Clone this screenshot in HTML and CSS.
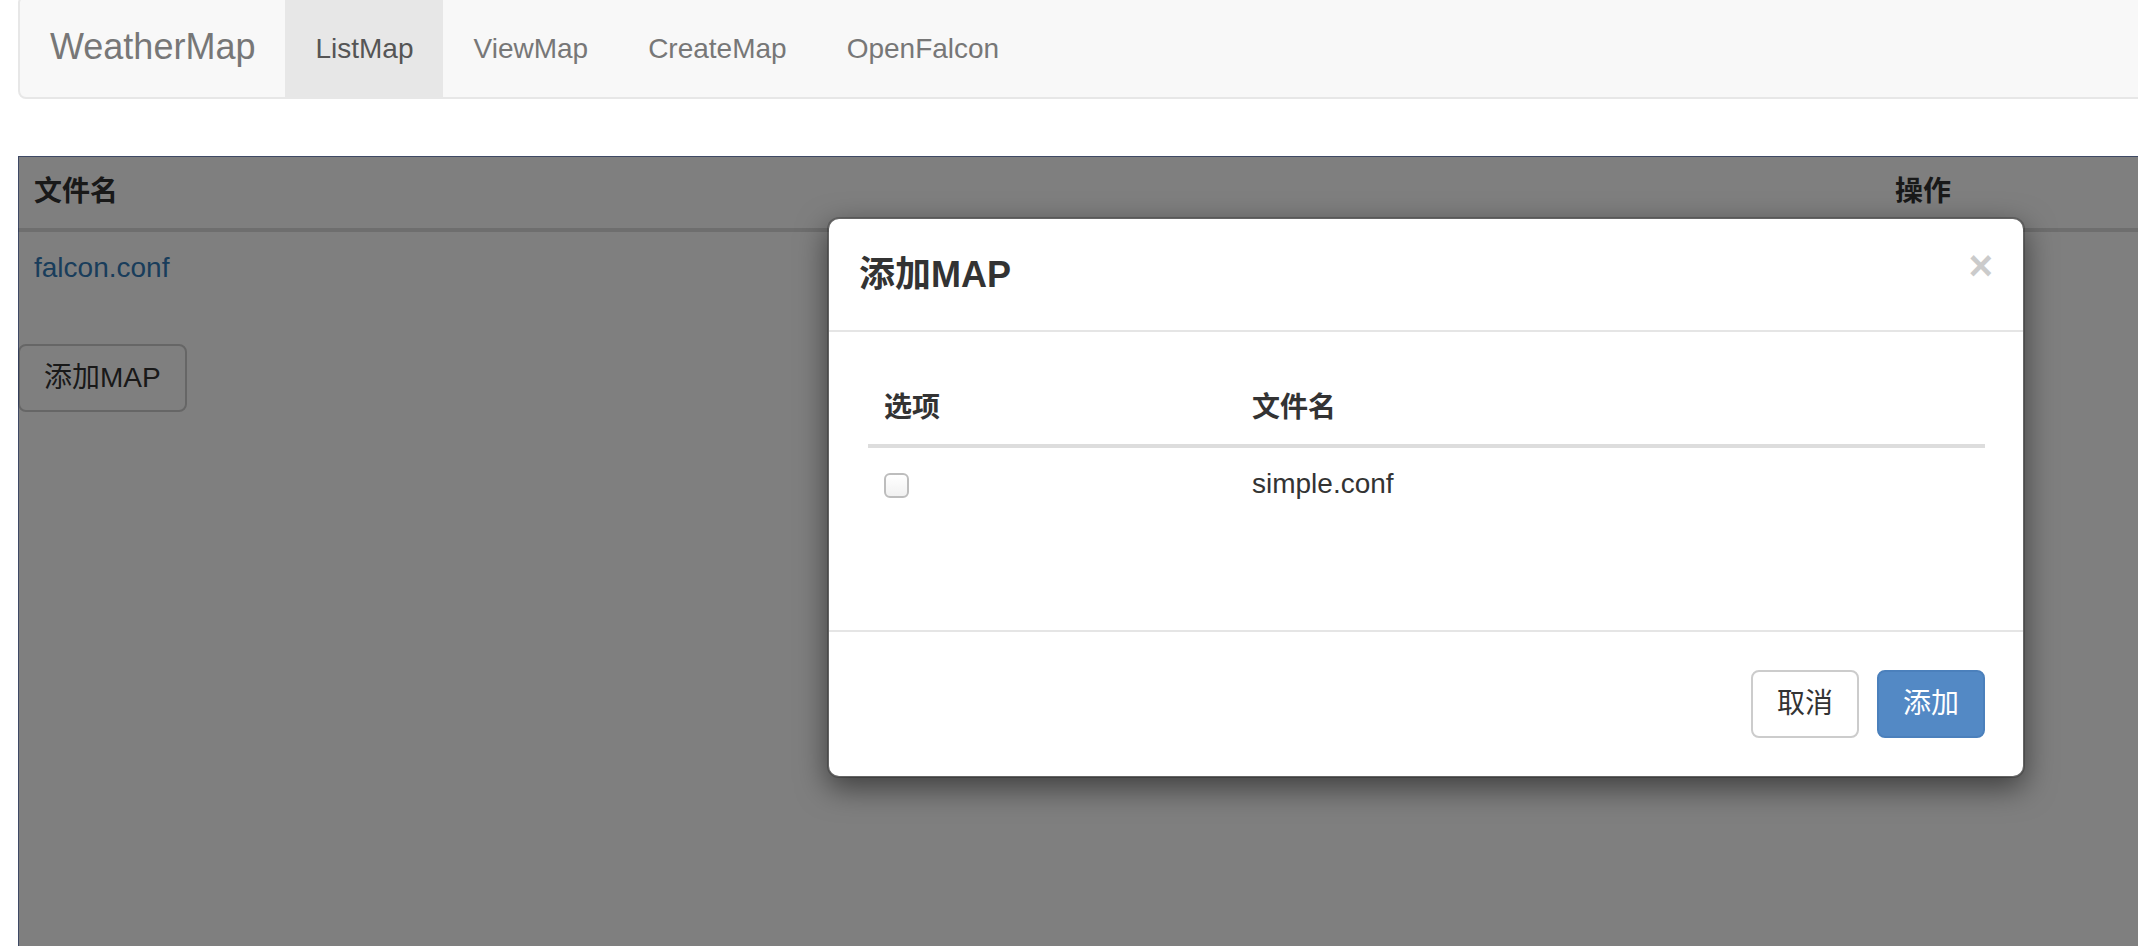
FILE: index.html
```html
<!DOCTYPE html>
<html lang="zh-CN">
<head>
<meta charset="utf-8">
<title>WeatherMap</title>
<link rel="stylesheet" href="styles.css">
</head>
<body>
<nav class="navbar">
  <a class="brand" href="#">WeatherMap</a>
  <ul class="nav">
    <li class="active"><a href="#">ListMap</a></li>
    <li><a href="#">ViewMap</a></li>
    <li><a href="#">CreateMap</a></li>
    <li><a href="#">OpenFalcon</a></li>
  </ul>
</nav>

<main class="content">
  <table class="table list">
    <thead>
      <tr><th class="col-name">文件名</th><th>操作</th></tr>
    </thead>
    <tbody>
      <tr><td><a class="link" href="#">falcon.conf</a></td><td></td></tr>
    </tbody>
  </table>
  <button class="btn btn-default">添加MAP</button>

  <div class="backdrop"></div>

  <div class="modal">
    <div class="modal-header">
      <span class="close">×</span>
      <h4 class="modal-title">添加MAP</h4>
    </div>
    <div class="modal-body">
      <table class="table inner">
        <thead>
          <tr><th class="col-opt">选项</th><th>文件名</th></tr>
        </thead>
        <tbody>
          <tr><td><input type="checkbox" class="check"></td><td>simple.conf</td></tr>
        </tbody>
      </table>
    </div>
    <div class="modal-footer">
      <button class="btn btn-default">取消</button>
      <button class="btn btn-primary">添加</button>
    </div>
  </div>
</main>
</body>
</html>
```

FILE: styles.css
```css
html, body {
  margin: 0;
  padding: 0;
  height: 100%;
  overflow: hidden;
  background: #fff;
}

body {
  font-family: "Liberation Sans", "Noto Sans CJK SC", sans-serif;
  font-size: 28px;
  line-height: 40px;
  color: #333;
}

a { text-decoration: none; }

/* ---------- navbar ---------- */
.navbar {
  display: flex;
  align-items: stretch;
  box-sizing: border-box;
  height: 104px;
  margin: -5px -20px 57px 18px;
  background: #f8f8f8;
  border: 2px solid #e7e7e7;
  border-radius: 8px;
}

.brand {
  display: block;
  padding: 30px 30px;
  font-size: 36px;
  line-height: 40px;
  color: #777;
}

.nav {
  display: flex;
  margin: 0;
  padding: 0;
  list-style: none;
}

.nav a {
  display: block;
  padding: 32px 30px 28px;
  line-height: 40px;
  color: #777;
}

.nav .active a {
  background: #e7e7e7;
  color: #555;
}

/* ---------- content ---------- */
.content {
  position: relative;
  margin-left: 18px;
  height: calc(100% - 156px);
}

.table {
  border-collapse: collapse;
  border-spacing: 0;
}

.table th,
.table td {
  padding: 16px;
  line-height: 40px;
  text-align: left;
  vertical-align: top;
}

.table th {
  font-weight: bold;
  border-bottom: 4px solid #ddd;
}

.list {
  width: calc(100% + 40px);
  margin-bottom: 40px;
}

.col-name { width: 1829px; }

.link { color: #337ab7; }

.btn {
  display: inline-block;
  box-sizing: border-box;
  margin: 0;
  padding: 12px 24px;
  font-family: "Liberation Sans", "Noto Sans CJK SC", sans-serif;
  font-size: 28px;
  line-height: 40px;
  border: 2px solid transparent;
  border-radius: 8px;
  cursor: pointer;
}

.btn-default {
  background: #fff;
  border-color: #ccc;
  color: #333;
}

.btn-primary {
  background: #5389c5;
  border-color: #4b80bc;
  color: #fff;
}

/* ---------- backdrop & modal ---------- */
.backdrop {
  position: absolute;
  inset: 0;
  background: rgba(0, 0, 0, 0.5);
  border-top: 1px solid rgba(10, 30, 80, 0.55);
  border-left: 1px solid rgba(10, 30, 80, 0.55);
  box-sizing: border-box;
}

.modal {
  position: absolute;
  left: 809px;
  top: 61px;
  width: 1198px;
  box-sizing: border-box;
  background: #fff;
  border: 2px solid rgba(0, 0, 0, 0.2);
  border-radius: 12px;
  box-shadow: 0 10px 30px rgba(0, 0, 0, 0.5);
  background-clip: padding-box;
}

.modal-header {
  padding: 30px;
  border-bottom: 2px solid #e5e5e5;
}

.modal-title {
  margin: 0;
  font-size: 36px;
  line-height: 51px;
  font-weight: 600;
  color: #333;
}

.close {
  float: right;
  margin-top: -4px;
  font-size: 42px;
  font-weight: bold;
  line-height: 1;
  color: #000;
  opacity: 0.2;
}

.modal-body {
  padding: 40px 38px 110px 39px;
}

.inner {
  width: 100%;
  margin: 0;
}

.col-opt { width: 336px; }

.check {
  -webkit-appearance: none;
  appearance: none;
  display: block;
  box-sizing: border-box;
  width: 25px;
  height: 25px;
  margin: 9px 0 0 0;
  border: 2px solid #bdbdbd;
  border-radius: 6px;
  background: linear-gradient(#fff, #f1f1f1);
}

.modal-footer {
  display: flex;
  justify-content: flex-end;
  gap: 18px;
  padding: 38px 38px;
  border-top: 2px solid #e5e5e5;
}
```
